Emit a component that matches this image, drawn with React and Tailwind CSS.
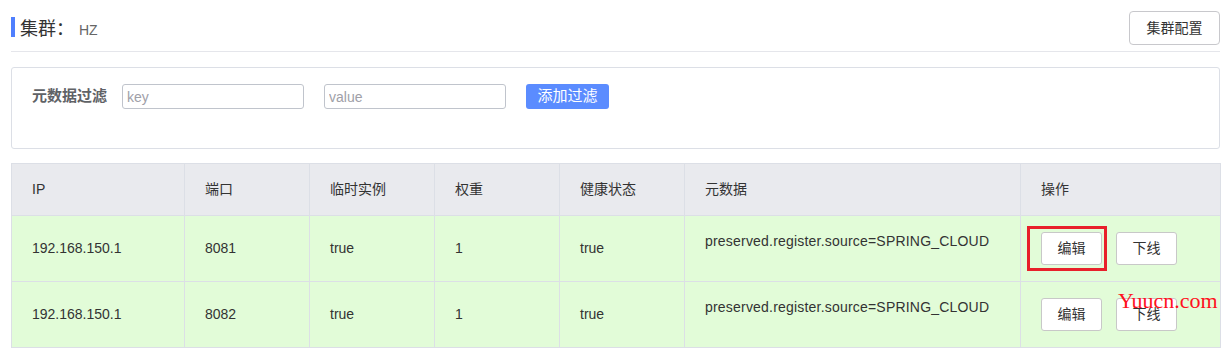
import React from "react";

const font = { fontFamily: '"Liberation Sans","Noto Sans CJK SC",sans-serif' };

const rows = [
  { ip: "192.168.150.1", port: "8081", eph: "true", weight: "1", healthy: "true", meta: "preserved.register.source=SPRING_CLOUD", boxed: true },
  { ip: "192.168.150.1", port: "8082", eph: "true", weight: "1", healthy: "true", meta: "preserved.register.source=SPRING_CLOUD", boxed: false },
];

function Btn({ children }) {
  return (
    <button className="h-[33px] w-[61px] rounded-[3px] border border-[#c8c8c8] bg-white text-[14px] text-[#333]">
      {children}
    </button>
  );
}

export default function App() {
  return (
    <div className="w-[1229px] h-[357px] overflow-hidden bg-white pl-[11px] pr-[9px] text-[#333]" style={font}>
      {/* header */}
      <div className="flex items-center justify-between h-[52px] border-b border-[#e5e6eb] pt-[5px]">
        <div className="mb-[2px] flex items-center">
          <div className="w-[4px] h-[20px] bg-[#4f7ffe]" />
          <div className="ml-[5px] mt-[3px] flex items-baseline">
            <span className="text-[18px] leading-none text-[#333]">集群：</span>
            <span className="ml-[5px] text-[14px] leading-none text-[#666]">HZ</span>
          </div>
        </div>
        <button className="h-[34px] w-[91px] rounded-[4px] border border-[#c8c8cc] bg-white text-[14px] text-[#333]">
          集群配置
        </button>
      </div>

      {/* filter */}
      <div className="mt-[15px] h-[82px] rounded-[3px] border border-[#dcdfe6] pl-[20px] pt-[16px]">
        <div className="flex items-center h-[25px]">
          <span className="w-[90px] text-[15px] font-bold text-[#606266]">元数据过滤</span>
          <input
            placeholder="key"
            className="h-[25px] w-[182px] rounded-[3px] border border-[#c0c4cc] px-[4px] text-[14px] text-[#333] placeholder:text-[#a0a0a8] outline-none"
            style={font}
          />
          <input
            placeholder="value"
            className="ml-[20px] h-[25px] w-[182px] rounded-[3px] border border-[#c0c4cc] px-[4px] text-[14px] text-[#333] placeholder:text-[#a0a0a8] outline-none"
            style={font}
          />
          <button className="ml-[20px] h-[25px] w-[83px] rounded-[3px] bg-[#5b8cff] text-[15px] text-white">
            添加过滤
          </button>
        </div>
      </div>

      {/* table */}
      <table className="mt-[14px] w-[1209px] table-fixed border-collapse text-[14px]">
        <colgroup>
          <col className="w-[173px]" />
          <col className="w-[125px]" />
          <col className="w-[125px]" />
          <col className="w-[125px]" />
          <col className="w-[125px]" />
          <col className="w-[336px]" />
          <col className="w-[200px]" />
        </colgroup>
        <thead>
          <tr className="bg-[#e9eaee]">
            {["IP", "端口", "临时实例", "权重", "健康状态", "元数据", "操作"].map((h) => (
              <th key={h} className="h-[52px] border border-[#dcdfe6] pl-[20px] text-left font-normal text-[#333]">
                {h}
              </th>
            ))}
          </tr>
        </thead>
        <tbody>
          {rows.map((r, i) => (
            <tr key={i} className="bg-[#e2fcd8]">
              <td className="h-[66px] border border-[#dcdfe6] pl-[20px]">{r.ip}</td>
              <td className="border border-[#dcdfe6] pl-[20px]">{r.port}</td>
              <td className="border border-[#dcdfe6] pl-[20px]">{r.eph}</td>
              <td className="border border-[#dcdfe6] pl-[20px]">{r.weight}</td>
              <td className="border border-[#dcdfe6] pl-[20px]">{r.healthy}</td>
              <td className="border border-[#dcdfe6] pl-[20px] pb-[14px] tracking-[0.2px]">{r.meta}</td>
              <td className="border border-[#dcdfe6] pl-[20px]">
                <div className="relative flex items-center gap-[14px]">
                  <Btn>编辑</Btn>
                  <Btn>下线</Btn>
                  {r.boxed && (
                    <div className="absolute left-[-14px] top-[-6px] h-[45px] w-[80px] border-[3px] border-[#e8202a]" />
                  )}
                  {!r.boxed && (
                    <span
                      className="absolute left-[77px] top-[-8px] text-[22px] leading-none text-[#ff1020]"
                      style={{ fontFamily: '"Liberation Serif","DejaVu Serif",serif' }}
                    >
                      Yuucn.com
                    </span>
                  )}
                </div>
              </td>
            </tr>
          ))}
        </tbody>
      </table>
    </div>
  );
}
